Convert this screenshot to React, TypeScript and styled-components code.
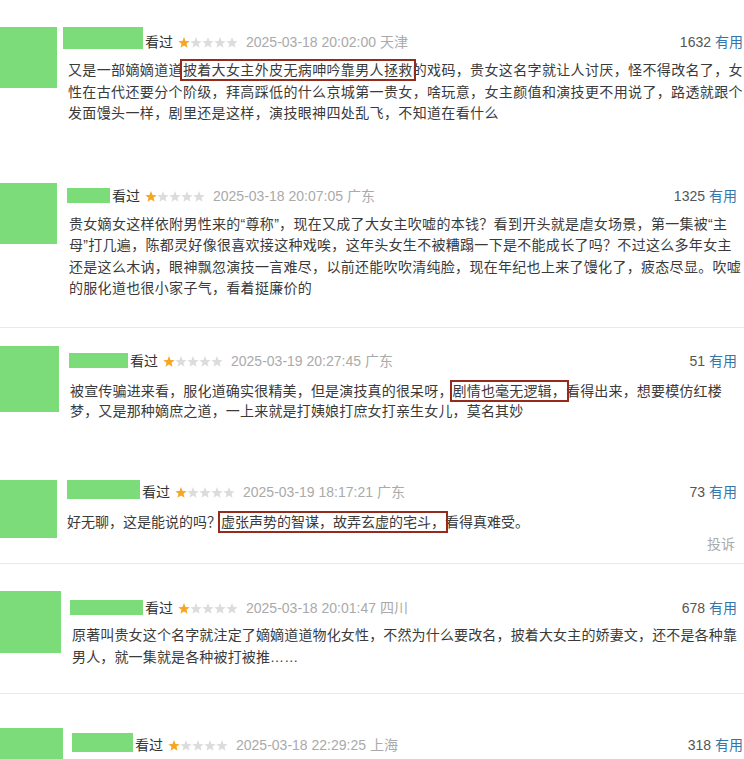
import React from 'react';
import styled, { createGlobalStyle } from 'styled-components';

const Global = createGlobalStyle`
  html, body { margin: 0; padding: 0; background: #fff; }
  body {
    font-family: "Liberation Sans", "Noto Sans CJK SC", sans-serif;
    color: #333;
  }
`;

const Page = styled.div`
  width: 744px;
  height: 759px;
  overflow: hidden;
  display: flex;
  flex-direction: column;
  background: #fff;
`;

const Item = styled.section<{ $h: number; $pt: number; $line?: boolean }>`
  flex-shrink: 0;
  box-sizing: border-box;
  height: ${(p) => p.$h}px;
  padding-top: ${(p) => p.$pt}px;
  display: flex;
  align-items: flex-start;
  border-bottom: ${(p) => (p.$line ? '1px solid #e9e9e9' : 'none')};
`;

const Avatar = styled.div<{ $w: number; $h: number }>`
  flex-shrink: 0;
  width: ${(p) => p.$w}px;
  height: ${(p) => p.$h}px;
  background: #7ddc7a;
`;

const Body = styled.div<{ $gap: number; $right: number }>`
  flex: 1;
  min-width: 0;
  margin-left: ${(p) => p.$gap}px;
  padding-right: ${(p) => p.$right}px;
  display: flex;
  flex-direction: column;
`;

const Header = styled.div<{ $top: number }>`
  display: flex;
  align-items: flex-end;
  margin-top: ${(p) => p.$top}px;
  font-size: 14px;
  line-height: 14px;
  white-space: nowrap;
`;

const NameBox = styled.div<{ $w: number; $h: number }>`
  flex-shrink: 0;
  width: ${(p) => p.$w}px;
  height: ${(p) => p.$h}px;
  background: #7ddc7a;
`;

const Watched = styled.span`
  margin-left: 2px;
  color: #333;
`;

const Stars = styled.svg`
  margin-left: 5px;
  margin-bottom: 1px;
  flex-shrink: 0;
`;

const DateText = styled.span`
  margin-left: 8px;
  color: #aaa;
`;

const Votes = styled.span`
  margin-left: auto;
  color: #555;
`;

const Useful = styled.span`
  color: #3377aa;
  margin-left: 4px;
`;

const Content = styled.div<{ $left: number; $top: number; $lh: number; $track: number }>`
  margin-left: ${(p) => p.$left}px;
  margin-top: ${(p) => p.$top}px;
  font-size: 14px;
  line-height: ${(p) => p.$lh}px;
  letter-spacing: ${(p) => p.$track}px;
  color: #3a3a3a;
`;

const Line = styled.div`
  white-space: nowrap;
`;

const Mark = styled.span`
  outline: 2px solid #962b1c;
  outline-offset: 1px;
`;

const Report = styled.div<{ $top: number }>`
  margin-top: ${(p) => p.$top}px;
  padding-right: 2px;
  text-align: right;
  font-size: 14px;
  line-height: 16px;
  color: #aaa;
`;

const starPts =
  '6,0 7.53,3.9 11.71,4.15 8.47,6.8 9.53,10.85 6,8.6 2.47,10.85 3.53,6.8 0.29,4.15 4.47,3.9';

const Rating: React.FC<{ value: number }> = ({ value }) => (
  <Stars width="60" height="11" viewBox="0 0 60 11">
    {[0, 1, 2, 3, 4].map((i) => (
      <polygon
        key={i}
        points={starPts}
        transform={`translate(${i * 12} 0)`}
        fill={i < value ? '#f6a623' : '#dcdcdc'}
      />
    ))}
  </Stars>
);

type Seg = string | { mark: string };

interface CommentData {
  h: number;
  pt: number;
  line?: boolean;
  avatar: [number, number];
  gap: number;
  right: number;
  nameTop: number;
  name: [number, number];
  date: string;
  votes: string;
  text: {
    left: number;
    top: number;
    lh: number;
    track: number;
    lines: Seg[][];
  } | null;
  report?: number;
}

const comments: CommentData[] = [
  {
    h: 165,
    pt: 27,
    avatar: [57, 61],
    gap: 6,
    right: 1,
    nameTop: 0,
    name: [80, 22],
    date: '2025-03-18 20:02:00 天津',
    votes: '1632',
    text: {
      left: 5,
      top: 11,
      lh: 21.5,
      track: 0.36,
      lines: [
        ['又是一部嫡嫡道道', { mark: '披着大女主外皮无病呻吟靠男人拯救' }, '的戏码，贵女这名字就让人讨厌，怪不得改名了，女'],
        ['性在古代还要分个阶级，拜高踩低的什么京城第一贵女，啥玩意，女主颜值和演技更不用说了，路透就跟个'],
        ['发面馒头一样，剧里还是这样，演技眼神四处乱飞，不知道在看什么'],
      ],
    },
  },
  {
    h: 163,
    pt: 18,
    line: true,
    avatar: [57, 61],
    gap: 10,
    right: 7,
    nameTop: 5,
    name: [43, 15],
    date: '2025-03-18 20:07:05 广东',
    votes: '1325',
    text: {
      left: 2,
      top: 11,
      lh: 21.4,
      track: 0.3,
      lines: [
        ['贵女嫡女这样依附男性来的“尊称”，现在又成了大女主吹嘘的本钱？看到开头就是虐女场景，第一集被“主'],
        ['母”打几遍，陈都灵好像很喜欢接这种戏唉，这年头女生不被糟蹋一下是不能成长了吗？不过这么多年女主'],
        ['还是这么木讷，眼神飘忽演技一言难尽，以前还能吹吹清纯脸，现在年纪也上来了馒化了，疲态尽显。吹嘘'],
        ['的服化道也很小家子气，看着挺廉价的'],
      ],
    },
  },
  {
    h: 132,
    pt: 18,
    avatar: [59, 66],
    gap: 10,
    right: 7,
    nameTop: 7,
    name: [59, 15],
    date: '2025-03-19 20:27:45 广东',
    votes: '51',
    text: {
      left: 1,
      top: 13,
      lh: 20,
      track: 0.17,
      lines: [
        ['被宣传骗进来看，服化道确实很精美，但是演技真的很呆呀，', { mark: '剧情也毫无逻辑，' }, '看得出来，想要模仿红楼'],
        ['梦，又是那种嫡庶之道，一上来就是打姨娘打庶女打亲生女儿，莫名其妙'],
      ],
    },
  },
  {
    h: 104,
    pt: 20,
    line: true,
    avatar: [57, 58],
    gap: 10,
    right: 7,
    nameTop: 0,
    name: [73, 19],
    date: '2025-03-19 18:17:21 广东',
    votes: '73',
    text: {
      left: 0,
      top: 12,
      lh: 22,
      track: 0,
      lines: [['好无聊，这是能说的吗？', { mark: '虚张声势的智谋，故弄玄虚的宅斗，' }, '看得真难受。']],
    },
    report: 3,
  },
  {
    h: 130,
    pt: 27,
    line: true,
    avatar: [61, 62],
    gap: 9,
    right: 7,
    nameTop: 9,
    name: [73, 15],
    date: '2025-03-18 20:01:47 四川',
    votes: '678',
    text: {
      left: 2,
      top: 9,
      lh: 22,
      track: 0.15,
      lines: [
        ['原著叫贵女这个名字就注定了嫡嫡道道物化女性，不然为什么要改名，披着大女主的娇妻文，还不是各种靠'],
        ['男人，就一集就是各种被打被推……'],
      ],
    },
  },
  {
    h: 65,
    pt: 34,
    avatar: [63, 40],
    gap: 9,
    right: 1,
    nameTop: 5,
    name: [61, 19],
    date: '2025-03-18 22:29:25 上海',
    votes: '318',
    text: null,
  },
];

const Comment: React.FC<{ c: CommentData }> = ({ c }) => (
  <Item $h={c.h} $pt={c.pt} $line={c.line}>
    <Avatar $w={c.avatar[0]} $h={c.avatar[1]} />
    <Body $gap={c.gap} $right={c.right}>
      <Header $top={c.nameTop}>
        <NameBox $w={c.name[0]} $h={c.name[1]} />
        <Watched>看过</Watched>
        <Rating value={1} />
        <DateText>{c.date}</DateText>
        <Votes>
          {c.votes}
          <Useful>有用</Useful>
        </Votes>
      </Header>
      {c.text && (
        <Content $left={c.text.left} $top={c.text.top} $lh={c.text.lh} $track={c.text.track}>
          {c.text.lines.map((segs, i) => (
            <Line key={i}>
              {segs.map((s, j) =>
                typeof s === 'string' ? <React.Fragment key={j}>{s}</React.Fragment> : <Mark key={j}>{s.mark}</Mark>
              )}
            </Line>
          ))}
        </Content>
      )}
      {c.report !== undefined && <Report $top={c.report}>投诉</Report>}
    </Body>
  </Item>
);

export default function App() {
  return (
    <>
      <Global />
      <Page>
        {comments.map((c, i) => (
          <Comment key={i} c={c} />
        ))}
      </Page>
    </>
  );
}
